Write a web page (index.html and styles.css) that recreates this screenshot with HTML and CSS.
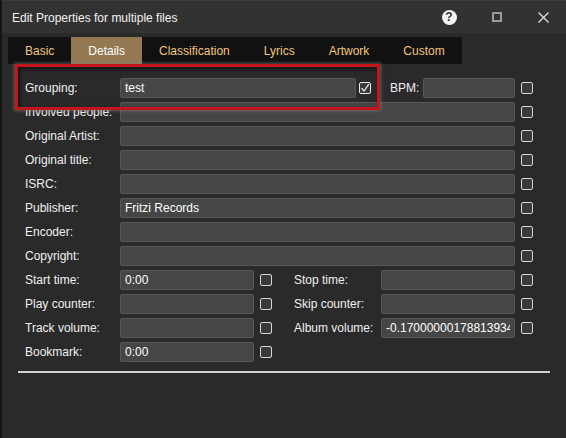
FILE: index.html
```html
<!DOCTYPE html>
<html lang="en">
<head>
  <meta charset="UTF-8">
  <title>Edit Properties for multiple files</title>
  <link rel="stylesheet" href="styles.css">
</head>
<body>
  <div class="window">
    <div class="titlebar">
      <span class="title">Edit Properties for multiple files</span>
      <div class="controls">
        <span class="tb-btn help"><span class="help-dot">?</span></span>
        <span class="tb-btn"><span class="max-box"></span></span>
        <span class="tb-btn">
          <svg width="11" height="11" viewBox="0 0 11 11"><path d="M0.5 0.5 L10.5 10.5 M10.5 0.5 L0.5 10.5" stroke="#e6e6e6" stroke-width="1.2" fill="none"/></svg>
        </span>
      </div>
    </div>

    <div class="tabs">
      <span class="tab">Basic</span>
      <span class="tab active">Details</span>
      <span class="tab">Classification</span>
      <span class="tab">Lyrics</span>
      <span class="tab">Artwork</span>
      <span class="tab">Custom</span>
    </div>

    <div class="form">
      <!-- grouping + bpm -->
      <div class="row">
        <label class="label">Grouping:</label>
        <input class="field grouping" value="test">
        <span class="cb checked tight">
          <svg width="10" height="10" viewBox="0 0 10 10"><path d="M1.5 5.2 L4 8 L8.8 1.2" stroke="#f0f0f0" stroke-width="1.2" fill="none"/></svg>
        </span>
        <label class="label bpm">BPM:</label>
        <input class="field bpm-field" value="">
        <span class="cb"></span>
      </div>

      <div class="row">
        <label class="label">Involved people:</label>
        <input class="field full" value="">
        <span class="cb"></span>
      </div>
      <div class="row">
        <label class="label">Original Artist:</label>
        <input class="field full" value="">
        <span class="cb"></span>
      </div>
      <div class="row">
        <label class="label">Original title:</label>
        <input class="field full" value="">
        <span class="cb"></span>
      </div>
      <div class="row">
        <label class="label">ISRC:</label>
        <input class="field full" value="">
        <span class="cb"></span>
      </div>
      <div class="row">
        <label class="label">Publisher:</label>
        <input class="field full" value="Fritzi Records">
        <span class="cb"></span>
      </div>
      <div class="row">
        <label class="label">Encoder:</label>
        <input class="field full" value="">
        <span class="cb"></span>
      </div>
      <div class="row">
        <label class="label">Copyright:</label>
        <input class="field full" value="">
        <span class="cb"></span>
      </div>

      <!-- two column rows -->
      <div class="row">
        <label class="label">Start time:</label>
        <input class="field short" value="0:00">
        <span class="cb"></span>
        <label class="label right">Stop time:</label>
        <input class="field short" value="">
        <span class="cb"></span>
      </div>
      <div class="row">
        <label class="label">Play counter:</label>
        <input class="field short" value="">
        <span class="cb"></span>
        <label class="label right">Skip counter:</label>
        <input class="field short" value="">
        <span class="cb"></span>
      </div>
      <div class="row">
        <label class="label">Track volume:</label>
        <input class="field short" value="">
        <span class="cb"></span>
        <label class="label right">Album volume:</label>
        <input class="field short" value="-0.17000000178813934">
        <span class="cb"></span>
      </div>
      <div class="row">
        <label class="label">Bookmark:</label>
        <input class="field short" value="0:00">
        <span class="cb"></span>
      </div>
    </div>

    <div class="separator"></div>

    <!-- annotation box drawn over the grouping row -->
    <div class="highlight"></div>
  </div>
</body>
</html>
```

FILE: styles.css
```css
html, body {
  margin: 0;
  padding: 0;
}

body {
  background: #2a2a2a;
  color: #f0f0f0;
  font-family: "Liberation Sans", Arial, sans-serif;
  font-size: 12px;
}

.window {
  position: relative;
  width: 564px;
  height: 438px;
  border-left: 2px solid #141414;
  background: #2a2a2a;
  overflow: hidden;
}

/* title bar */
.titlebar {
  display: flex;
  align-items: center;
  height: 33px;
  background: #323232;
  border-top: 1px solid #3e3e3e;
  box-sizing: border-box;
}

.title {
  padding-left: 10px;
  padding-top: 1px;
  color: #f2f2f2;
}

.controls {
  display: flex;
  margin-left: auto;
  height: 100%;
}

.tb-btn {
  display: flex;
  align-items: center;
  justify-content: center;
  width: 46px;
}

.tb-btn.help {
  width: 50px;
}

.help-dot {
  display: flex;
  align-items: center;
  justify-content: center;
  width: 15px;
  height: 15px;
  border-radius: 50%;
  background: #f4f4f4;
  color: #333;
  font-weight: bold;
  font-size: 12px;
}

.max-box {
  width: 10px;
  height: 10px;
  border: 2px solid #9a9a9a;
  box-sizing: border-box;
}

/* tabs */
.tabs {
  display: inline-flex;
  margin: 4px 0 0 6px;
  height: 27px;
  background: #111;
}

.tab {
  display: flex;
  align-items: center;
  padding: 0 17px;
  color: #f3c67c;
}

.tab.active {
  background: #937852;
  color: #fff;
}

/* form */
.form {
  display: flex;
  flex-direction: column;
  gap: 4px;
  margin-top: 14px;
  padding-left: 23px;
}

.row {
  display: flex;
  align-items: center;
  height: 20px;
}

.label {
  width: 95px;
  flex-shrink: 0;
  color: #f0f0f0;
}

.label.bpm {
  width: 33px;
  margin-left: 19px;
}

.label.right {
  width: 87px;
  margin-left: 22px;
}

.field {
  height: 20px;
  box-sizing: border-box;
  padding: 0 4px;
  border: 1px solid #575757;
  border-radius: 2px;
  background: #464646;
  color: #fff;
  font: inherit;
  outline: none;
}

.field.full {
  width: 395px;
}

.field.grouping {
  width: 236px;
}

.field.bpm-field {
  width: 92px;
}

.field.short {
  width: 134px;
}

.cb {
  display: flex;
  align-items: center;
  justify-content: center;
  width: 12px;
  height: 12px;
  margin-left: 6px;
  border: 1.5px solid #d6d6d6;
  border-radius: 2px;
  background: #3a3a3a;
  box-sizing: border-box;
}

.cb.tight {
  margin-left: 3px;
}

.cb.checked {
  border-color: #e8e8e8;
}

.separator {
  height: 2px;
  width: 532px;
  margin: 9px 0 0 16px;
  background: #d2d2d2;
}

/* red annotation rectangle */
.highlight {
  position: absolute;
  left: 13px;
  top: 64px;
  width: 365px;
  height: 46px;
  box-sizing: border-box;
  border: 3px solid #c4141c;
  box-shadow: 0 0 3px 1px rgba(130, 130, 130, 0.6), inset 2px 2px 5px rgba(0, 0, 0, 0.55);
}
```
